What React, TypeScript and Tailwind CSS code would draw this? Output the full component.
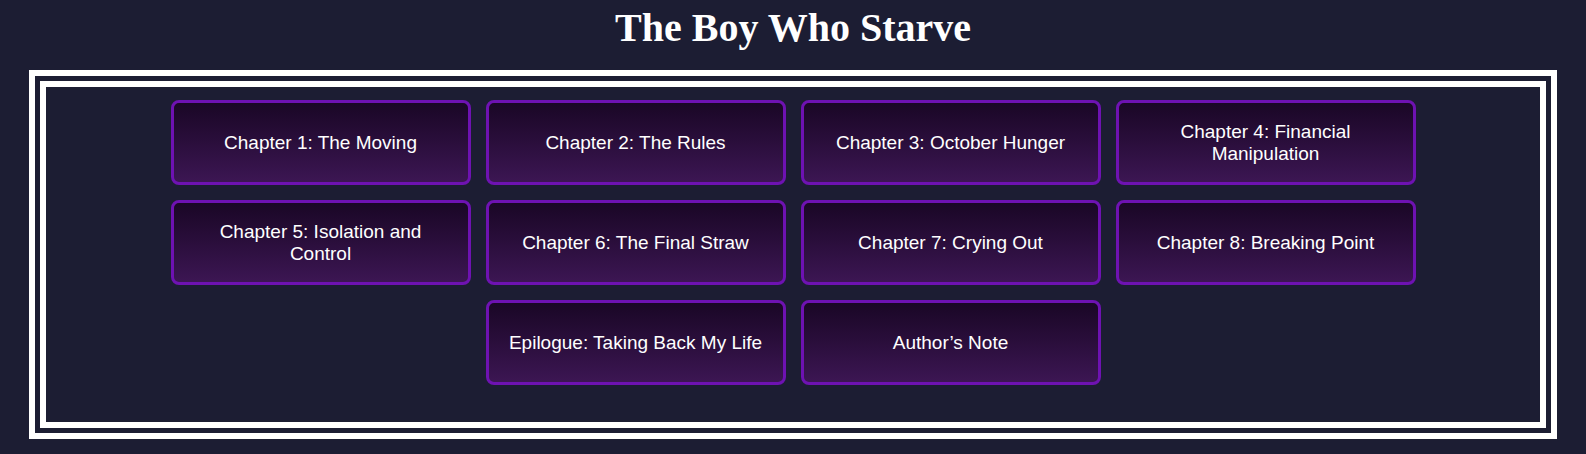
import React from 'react';

const chapters = [
  'Chapter 1: The Moving',
  'Chapter 2: The Rules',
  'Chapter 3: October Hunger',
  'Chapter 4: Financial Manipulation',
  'Chapter 5: Isolation and Control',
  'Chapter 6: The Final Straw',
  'Chapter 7: Crying Out',
  'Chapter 8: Breaking Point',
  'Epilogue: Taking Back My Life',
  'Author\u2019s Note',
];

const App: React.FC = () => {
  return (
    <div className="min-h-screen w-full bg-[#1c1d33] pt-[5px] pb-[15px]">
      {/* Titre */}
      <h1 className="text-center text-[40px] font-bold leading-[46px] text-white mb-[19px] font-['Liberation_Serif',_'Times_New_Roman',_serif]">
        The Boy Who Starve
      </h1>

      {/* Cadre double */}
      <div className="mx-[29px] border-[6px] border-white p-[5px]">
        <div className="border-[6px] border-white pt-[13px] pb-[37px]">
          <div className="flex flex-wrap justify-center gap-[15px]">
            {chapters.map((title) => (
              <button
                key={title}
                className="w-[300px] h-[85px] flex items-center justify-center px-[15px] rounded-[8px] border-[3px] border-[#6e12b2] bg-gradient-to-b from-[#1a0726] to-[#3c1653] text-white text-[19px] leading-[21.5px] text-center font-['Liberation_Sans',_Arial,_sans-serif]"
              >
                {title}
              </button>
            ))}
          </div>
        </div>
      </div>
    </div>
  );
};

export default App;
